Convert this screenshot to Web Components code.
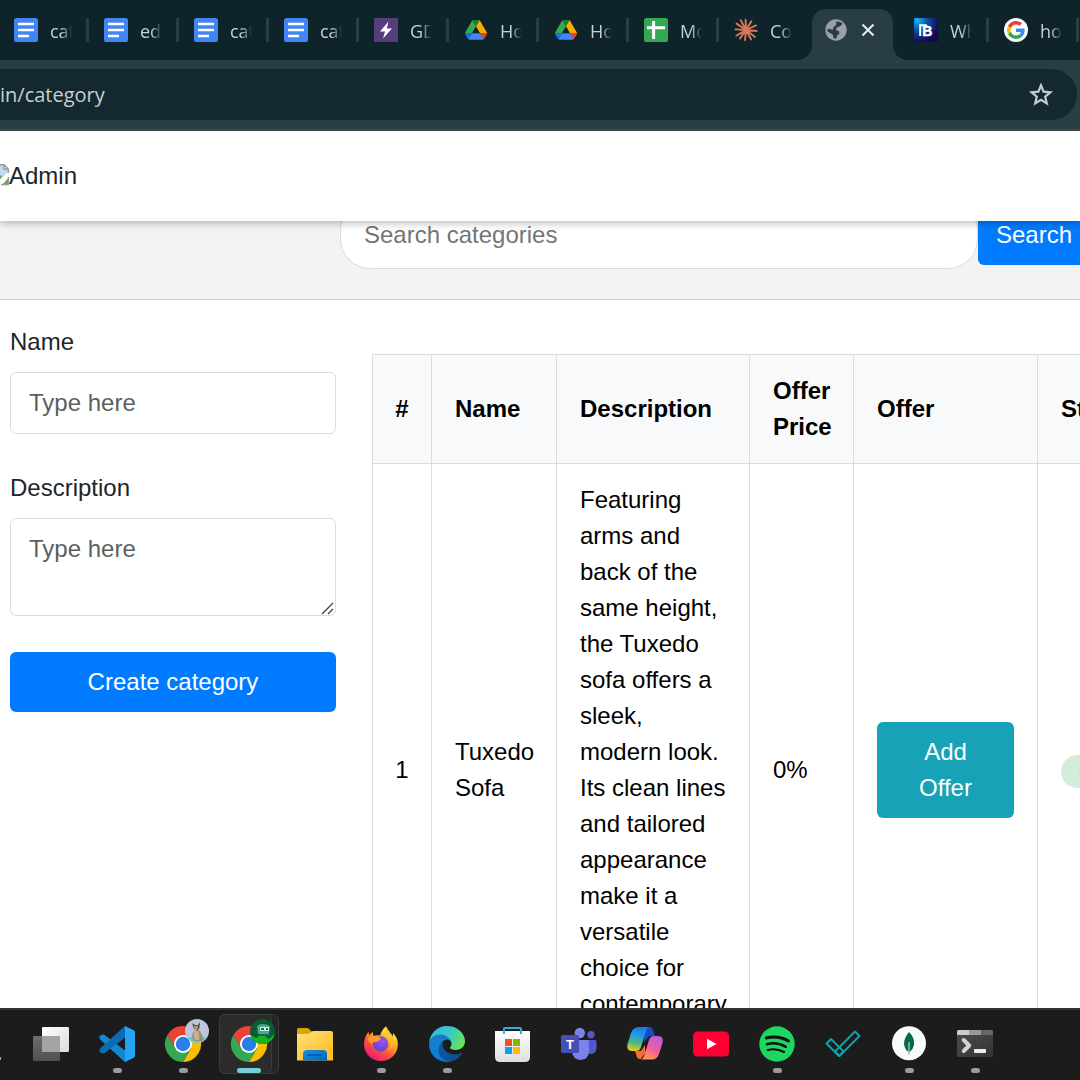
<!DOCTYPE html>
<html lang="en">
<head>
<meta charset="utf-8">
<title>Category</title>
<style>
  body { margin: 0; font-family: "Liberation Sans", Arial, sans-serif; font-size: 24px; line-height: 36px; color: #212529; }
</style>
</head>
<body>
<desktop-screen></desktop-screen>

<script>
const CHROME = `
  <path fill="#ea4335" d="M2.4 9A18 18 0 0 1 33.6 9L18 9.2L10.2 22.5Z"/>
  <path fill="#fbbc04" d="M33.6 9A18 18 0 0 1 18 36L25.8 22.5L18 9Z"/>
  <path fill="#34a853" d="M18 36A18 18 0 0 1 2.4 9L10.2 22.5L25.8 22.5Z"/>
  <circle cx="18" cy="18" r="9" fill="#fff"/><circle cx="18" cy="18" r="7.2" fill="#2b7de9"/>`;

const ICONS = {
  docs: ['0 0 24 24', `<rect width="24" height="24" rx="2.6" fill="#4285f4"/>
    <path stroke="#fff" stroke-width="2.6" d="M4 6H20M4 12H20M4 18H15"/>`],
  bolt: ['0 0 24 24', `<rect width="24" height="24" fill="#563d7c"/><path fill="#fff" d="M14.5 3.5L6 13.4H11L9 20.5L18 10.4H12.8Z"/>`],
  drive: ['0 0 24 24', `<g transform="translate(1 2) scale(.252)">
    <path fill="#1a73e8" d="m6.6 66.85 3.85 6.65c.8 1.4 1.95 2.5 3.3 3.3l13.75-23.8h-27.5c0 1.55.4 3.1 1.2 4.5z"/>
    <path fill="#34a853" d="m43.65 25-13.75-23.8c-1.35.8-2.5 1.9-3.3 3.3l-25.4 44a9.06 9.06 0 0 0-1.2 4.5h27.5z"/>
    <path fill="#ea4335" d="m73.55 76.8c1.35-.8 2.5-1.9 3.3-3.3l1.6-2.75 7.65-13.25c.8-1.4 1.2-2.95 1.2-4.5h-27.5l5.85 11.5z"/>
    <path fill="#188038" d="m43.65 25 13.75-23.8c-1.35-.8-2.9-1.2-4.5-1.2h-18.5c-1.6 0-3.15.45-4.5 1.2z"/>
    <path fill="#4285f4" d="m59.8 53h-32.3l-13.75 23.8c1.35.8 2.9 1.2 4.5 1.2h50.8c1.6 0 3.15-.45 4.5-1.2z"/>
    <path fill="#fbab00" d="m73.4 26.5-12.7-22c-.8-1.4-1.95-2.5-3.3-3.3l-13.75 23.8 16.15 28h27.45c0-1.55-.4-3.1-1.2-4.5z"/></g>`],
  sheet: ['0 0 24 24', `<rect width="24" height="24" rx="2.6" fill="#34a853"/><path stroke="#fff" stroke-width="3" d="M3 9.8H21M9.6 3V21"/>`],
  burst: ['0 0 24 24', `<g stroke="#d97757" stroke-width="1.9" stroke-linecap="round">
    <path d="M12 12L11.6 1.8M12 12L6.8 2.2M12 12L2.6 5.6M12 12L1.4 11.4M12 12L2.4 17.6M12 12L6 20.4M12 12L11 22.2M12 12L17 21.4M12 12L21 19M12 12L22.6 13M12 12L22 7.4M12 12L17.4 3.2"/></g><circle cx="12" cy="12" r="3.2" fill="#d97757"/>`],
  globe: ['0 0 24 24', `<circle cx="12" cy="12" r="10.7" fill="#9ba0a8"/>
    <path fill="#293e44" d="M12.5 3.6C15 3.4 17 4.2 18.6 5.8L15.8 8.6L13 9.2L11.8 12L15 13.2L15.4 15.8L13 17.4L12.4 20.6L9.4 20.2L9 16.8L6.4 15.2L3.4 13.2L3.5 10.8L9 11.8L9.4 9L12 7.2Z"/>`],
  bee: ['0 0 24 24', `<defs><radialGradient id="bg" cx=".15" cy=".1" r=".9"><stop offset="0" stop-color="#17b5f5"/><stop offset=".45" stop-color="#0b4fa8"/><stop offset="1" stop-color="#160858"/></radialGradient></defs>
    <rect width="24" height="24" fill="url(#bg)"/><path d="M6.2 18V7.2H13" fill="none" stroke="#fff" stroke-width="2"/>
    <text x="8.2" y="18" fill="#fff" stroke="#fff" stroke-width=".5" font-family="Liberation Sans" font-weight="700" font-size="14">B</text>`],
  google: ['0 0 24 24', `<circle cx="12" cy="12" r="12" fill="#fff"/><g transform="translate(3 3) scale(.375)">
    <path fill="#ea4335" d="M24 9.5c3.54 0 6.71 1.22 9.21 3.6l6.85-6.85C35.9 2.38 30.47 0 24 0 14.62 0 6.51 5.38 2.56 13.22l7.98 6.19C12.43 13.72 17.74 9.5 24 9.5z"/>
    <path fill="#4285f4" d="M46.98 24.55c0-1.57-.15-3.09-.38-4.55H24v9.02h12.94c-.58 2.96-2.26 5.48-4.78 7.18l7.73 6c4.51-4.18 7.09-10.36 7.09-17.65z"/>
    <path fill="#fbbc05" d="M10.53 28.59c-.48-1.45-.76-2.99-.76-4.59s.27-3.14.76-4.59l-7.98-6.19C.92 16.46 0 20.12 0 24c0 3.88.92 7.54 2.56 10.78l7.97-6.19z"/>
    <path fill="#34a853" d="M24 48c6.48 0 11.93-2.13 15.89-5.81l-7.73-6c-2.15 1.45-4.92 2.3-8.16 2.3-6.26 0-11.57-4.22-13.47-9.91l-7.98 6.19C6.51 42.62 14.62 48 24 48z"/></g>`],
  close: ['0 0 14 14', `<path stroke="#e4eaec" stroke-width="2.1" d="M1.5 1.5L12.5 12.5M12.5 1.5L1.5 12.5"/>`],
  star: ['0 0 24 24', `<path fill="none" stroke="#c5cbcd" stroke-width="2.2" d="M12 2.400L14.600 8.700L21.400 9.300L16.200 13.700L17.800 20.400L12 16.800L6.200 20.400L7.800 13.700L2.600 9.300L9.400 8.700Z"/>`],
  broken: ['0 0 9 24', `<path fill="#c3d6f5" d="M0 1H4L8 5V8L0 16Z"/><path fill="#fff" d="M4 0V5H8.500Z"/>
    <path fill="none" stroke="#9a9a9a" stroke-width="1.400" d="M0 .700H4L8.300 5V9M4 .700V5H8.300"/>
    <path fill="#58ad3a" d="M0 13V11L2 12.600L0 15ZM3 20L8 14.500V20Z"/><path stroke="#9a9a9a" stroke-width="1.400" d="M1 20.500H9M8.400 13V20.500"/>`],
  grip: ['0 0 14 14', `<path stroke="#444" stroke-width="1.4" d="M2 13L13 2M8 13L13 8"/>`],

  taskview: ['0 0 36 36', `<defs><linearGradient id="tv" x1="0" y1="0" x2="1" y2="1"><stop offset="0" stop-color="#fff"/><stop offset="1" stop-color="#dcdcdc"/></linearGradient>
    <linearGradient id="tg" x1="0" y1="0" x2="0" y2="1"><stop offset="0" stop-color="#6d6d6d"/><stop offset="1" stop-color="#505050"/></linearGradient></defs>
    <rect y="10" width="27" height="25" rx="1.3" fill="url(#tg)"/><rect x="9" y="1" width="27" height="25" rx="1.3" fill="url(#tv)"/><path fill="#a3a3a3" d="M9 10H26Q27 10 27 11V26H10Q9 26 9 25Z"/>`],
  code: ['0 0 36 36', `<path fill="#1287d6" d="M1 9.8L3.5 8.5Q4.7 8.2 5.6 9L27 25.2V36L25.3 35.4L.6 13Q-.4 11.5 1 9.8Z"/>
    <path fill="#0b6cb4" d="M1 26.2L3.5 27.5Q4.7 27.8 5.6 27L27 10.8V0L25.3.6L.6 23Q-.4 24.5 1 26.2Z"/>
    <path fill="#25a3f2" d="M26 0L34.8 4.2Q36 4.9 36 6.2V29.8Q36 31.1 34.8 31.8L26 36Z"/>`],
  chrome1: ['0 0 36 36', `${CHROME}<clipPath id="ca"><circle cx="32" cy="5" r="12"/></clipPath><g clip-path="url(#ca)"><rect x="20" y="-7" width="24" height="24" fill="#bcc7df"/>
    <path fill="#62cfc4" d="M20 13Q32 8 44 12V18H20Z"/><path fill="#a08a6c" d="M28 6Q26 12 29 15H38Q38 9 34 4Z"/><path fill="#c3b193" d="M29 4Q28 10 30 14H34Q35 8 33 4Z"/><path fill="#5b4a40" d="M27 -3L30 -1H33L35 -4L34.500 2L32 5L29 3Z"/><path fill="#b7a07c" d="M29 0H33L32 4H30Z"/></g>`],
  chrome2: ['0 0 36 36', `${CHROME}<clipPath id="cb"><circle cx="31.5" cy="5.5" r="12.5"/></clipPath><g clip-path="url(#cb)"><rect x="18" y="-8" width="27" height="27" fill="#075c33"/>
    <path fill="#15b51e" d="M18 8L25 12L31 8L38 13L45 7V20H18Z"/><path fill="#43a98a" d="M26 0Q31 -4 39 0L38 8H27Z"/><path fill="#d5eee6" d="M29 1H38V5H29Z"/><path fill="#176a50" d="M30 2H33V4H30ZM35 2H37V4H35ZM28 8H39V10H28Z"/></g>`],
  folder: ['0 0 36 36', `<defs><linearGradient id="fo" x1="0" y1="0" x2="1" y2="1"><stop offset="0" stop-color="#ffe07a"/><stop offset="1" stop-color="#fdbb1d"/></linearGradient><linearGradient id="fb" x1="0" y1="0" x2="1" y2="1"><stop offset="0" stop-color="#1792e0"/><stop offset="1" stop-color="#0866b8"/></linearGradient></defs>
    <path fill="#dea203" d="M0 4Q0 2 2 2H10Q11 2 12 3L15 6L12 10H0Z"/><path fill="url(#fo)" d="M0 8H10Q12 8 13 7L14 6Q15 5 17 5H34Q36 5 36 7V34.5H0Z"/>
    <path fill="url(#fb)" d="M6 34.5V28Q6 24 10 24H26Q30 24 30 28V34.5Z"/><path stroke="#07569b" stroke-width="1.6" stroke-linecap="round" d="M11 29H25"/>`],
  firefox: ['0 0 36 36', `<defs><linearGradient id="f1" x1=".85" y1=".05" x2=".25" y2="1"><stop offset=".05" stop-color="#fff04a"/><stop offset=".35" stop-color="#ffae24"/><stop offset=".6" stop-color="#ff5a36"/><stop offset="1" stop-color="#e5127b"/></linearGradient><radialGradient id="f2" cx=".6" cy=".35" r=".7"><stop offset="0" stop-color="#a44df5"/><stop offset="1" stop-color="#5846c9"/></radialGradient></defs>
    <path fill="url(#f1)" d="M1 18C1 13 3 9 5.5 5.8L6.2 9.2L9.5 5.8L10.5 10Q14 8.6 17 9.6C18 6 20 2.5 23 .3C23.5 5 28 6.8 30 10.8L30 7C33.5 10.5 35.2 14.5 34.8 19.5C34 29 27 35 18 35C8 35 1 27.5 1 18Z"/>
    <circle cx="17.6" cy="17.8" r="7.6" fill="url(#f2)"/><path fill="#ff9a2b" d="M5 12Q11 8 17 11.500L18 13L14.500 15.500L11.500 16.500Q9.500 14.500 9 18Q5 16 5 12Z"/>
    <path fill="#ffc02f" opacity=".85" d="M23 .3C22 6 27 10 28 15Q29 22 23.5 26Q31 23 31 13Q27 6 23 .3Z"/>`],
  edge: ['0 0 256 256', `<defs><linearGradient id="e1" x1="0" x2="1"><stop offset="0" stop-color="#0c59a4"/><stop offset="1" stop-color="#114a8b"/></linearGradient><linearGradient id="e2" x1=".6" y1="0" x2=".3" y2="1"><stop offset="0" stop-color="#1b78c4"/><stop offset=".5" stop-color="#1380d4"/><stop offset="1" stop-color="#0a7bd8"/></linearGradient><linearGradient id="e3" x1="0" y1=".3" x2="1" y2=".65"><stop offset="0" stop-color="#35b9e9"/><stop offset=".5" stop-color="#37c7c8"/><stop offset="1" stop-color="#6be44f"/></linearGradient></defs>
    <path fill="url(#e1)" d="M231 190.5c-3.4 1.8-6.9 3.4-10.5 4.7a101.9 101.9 0 0 1-35.9 6.5c-47.3 0-88.5-32.5-88.5-74.3 0-11.4 6.4-21.9 16.4-27.3-42.8 1.8-53.8 46.4-53.8 72.5 0 74 68.1 81.4 82.8 81.4 7.9 0 19.8-2.3 27-4.6l1.3-.4a128 128 0 0 0 66.6-52.8 4 4 0 0 0-5.4-5.7z"/>
    <path fill="url(#e2)" d="M105.7 241.4a79.2 79.2 0 0 1-22.7-21.3 80.7 80.7 0 0 1 29.5-120c3.2-1.5 8.5-4.1 15.6-4a32.4 32.4 0 0 1 25.7 13 31.9 31.9 0 0 1 6.3 18.7c0-.2 24.5-79.6-80-79.6-43.9 0-80 41.7-80 78.2a130.2 130.2 0 0 0 12.1 56 128 128 0 0 0 156.4 67 75.6 75.6 0 0 1-62.8-8z"/>
    <path fill="url(#e3)" d="M152.3 148.9c-.8 1-3.3 2.5-3.3 5.7 0 2.6 1.7 5.1 4.7 7.2 14.4 10 41.5 8.7 41.6 8.7a59.6 59.6 0 0 0 30.3-8.3 61.4 61.4 0 0 0 30.4-52.9c.3-22.4-8-37.3-11.3-43.9C223.5 23.9 177.7 0 128 0A128 128 0 0 0 0 126.2c.5-36.5 36.8-66 80-66 3.5 0 23.5.3 42 10.1 16.3 8.6 24.9 18.9 30.8 29.2 6.2 10.7 7.3 24.1 7.3 29.5 0 5.3-2.7 13.3-7.8 19.9z"/>`],
  store: ['0 0 36 36', `<defs><linearGradient id="st" x1="0" y1="0" x2="0" y2="1"><stop offset="0" stop-color="#fff"/><stop offset="1" stop-color="#dedede"/></linearGradient></defs>
    <path fill="url(#st)" d="M0 5H35V31Q35 36 30 36H5Q0 36 0 31Z"/><path fill="none" stroke="#27b0ea" stroke-width="2" d="M9 8V3Q9 2 10 2H25Q26 2 26 3V8"/>
    <path fill="#f25022" d="M10 13H17V20H10Z"/><path fill="#7fba00" d="M18 13H25V20H18Z"/><path fill="#00a4ef" d="M10 21H17V28H10Z"/><path fill="#ffb900" d="M18 21H25V28H18Z"/>`],
  teams: ['0 0 36 36', `<circle cx="30" cy="8.7" r="3.7" fill="#5059c9"/><path fill="#5059c9" d="M25 14H34Q35.5 14 35.5 15.5V22Q35 28 29 28Q26 28 25 26Z"/>
    <circle cx="18.8" cy="7" r="5.2" fill="#7b83eb"/><path fill="#7b83eb" d="M11 14H26.5Q28 14 28 15.5V25Q27.5 33.5 19.5 34Q12 33.5 11 26Z"/>
    <rect y="9" width="18" height="18" rx="1.6" fill="#464eb8"/><text x="9" y="22.6" text-anchor="middle" fill="#fff" font-family="Liberation Sans" font-weight="700" font-size="13">T</text>`],
  copilot: ['0 0 36 36', `<defs><linearGradient id="c1" x1=".5" y1="0" x2=".35" y2="1"><stop offset="0" stop-color="#1c78ea"/><stop offset=".35" stop-color="#1e9fe0"/><stop offset=".68" stop-color="#52b77e"/><stop offset="1" stop-color="#f3cb17"/></linearGradient><linearGradient id="c2" x1=".8" y1="0" x2=".3" y2="1"><stop offset="0" stop-color="#b65bea"/><stop offset=".5" stop-color="#ef5ba1"/><stop offset="1" stop-color="#ff994b"/></linearGradient></defs>
    <path fill="#174ec4" d="M18 1H22Q25 1 26 4L28 10H24Q21 10 20 13L17 16Z"/><path fill="#f76a36" d="M8 25H14L18 19L18 27L14 33H13Q10 33 9.5 30Z"/>
    <path fill="url(#c1)" d="M12 1H23Q20 1 19 5L14 21Q13 25 9 25H5Q-1 25 .5 18L4 7Q6 1 12 1Z"/>
    <path fill="url(#c2)" d="M27 10H31Q37 10 35.5 17L32 28Q30 33.5 25 33.5H13Q16 33.5 17 30L22 14Q23.5 10 27 10Z"/>`],
  youtube: ['0 0 36 36', `<rect y="5.5" width="36" height="25" rx="4.5" fill="#ff0033"/><path fill="#fff" d="M14 12.7V23.3L23.5 18Z"/>`],
  spotify: ['0 0 36 36', `<circle cx="18" cy="18" r="17.7" fill="#1ed760"/><g fill="none" stroke="#121212" stroke-linecap="round">
    <path stroke-width="3" d="M7.3 12Q19 9 29.5 15"/><path stroke-width="2.5" d="M8 18.2Q18 15.6 26.8 20.8"/><path stroke-width="2.1" d="M8.8 24Q17.5 21.8 25 26"/></g>`],
  check: ['0 0 36 36', `<g fill="none" stroke="#0ca5ad" stroke-width="1.9" stroke-linejoin="round"><path d="M30 5.5L34.5 10L14.5 30L10 25.5Z"/><path d="M6 13L1.5 17.5L14 30L18.5 25.5Z"/></g>`],
  leaf: ['0 0 36 36', `<circle cx="18" cy="17.3" r="17" fill="#f9fbfa"/><path fill="#04684a" d="M18 6Q24 12 23 18.5Q22 24 18.4 26L18 28.5L17.6 26Q13.500 23 13 18Q13 12 18 6Z"/><path stroke="#a6cdbd" stroke-width="1.3" d="M18 16V28.5"/>`],
  terminal: ['0 0 36 36', `<defs><linearGradient id="tm" x1="0" y1="0" x2="1" y2="1"><stop offset="0" stop-color="#4d4d4d"/><stop offset="1" stop-color="#343434"/></linearGradient></defs>
    <rect y="4" width="36" height="27" rx="1.5" fill="url(#tm)"/><path fill="#ccc" d="M0 9V5.5Q0 4 1.5 4H12V9Z"/><path fill="#999" d="M12 4H24V9H12Z"/><path fill="#666" d="M24 4H34.5Q36 4 36 5.5V9H24Z"/>
    <path fill="none" stroke="#d2d2d2" stroke-width="4" stroke-linecap="round" stroke-linejoin="round" d="M6.7 14L12.2 19.5L6.7 25"/><rect x="17" y="23" width="12" height="4" rx=".8" fill="#ececec"/>`]
};

function define(name, render) {
  customElements.define(name, class extends HTMLElement {
    connectedCallback() {
      if (this.shadowRoot) return;
      const t = document.createElement('template');
      t.innerHTML = '<style>*,*::before,*::after{box-sizing:border-box}</style>' + render(this);
      this.attachShadow({ mode: 'open' }).append(t.content.cloneNode(true));
    }
  });
}

define('ui-icon', el => {
  const [box, art] = ICONS[el.getAttribute('name')];
  return `<style>:host{display:block;flex:none}svg{display:block;width:100%;height:100%;overflow:visible}</style>
    <svg viewBox="${box}" aria-hidden="true">${art}</svg>`;
});

define('browser-tab', el => `
<style>
  :host { display: flex; flex: none; box-sizing: border-box; width: 90px; height: 60px; align-items: center; padding-left: 14px; position: relative; }
  ui-icon { width: 24px; height: 24px; }
  span { width: 22px; margin-left: 12px; padding-top: 2px; overflow: hidden; white-space: nowrap;
    font: 18px/26px "Open Sans", "Noto Sans", sans-serif; color: #c3d2d6;
    mask-image: linear-gradient(90deg, #000 50%, transparent); -webkit-mask-image: linear-gradient(90deg, #000 50%, transparent); }
  i { display: block; width: 3px; height: 24px; margin-left: 14px; background: #293e44; }
  :host([plain]) i { display: none; }
  .shape { display: none; }
  :host([active]) .shape { display: block; position: absolute; inset: 9px 7px 0 2px; background: #293e44; border-radius: 14px 14px 0 0; }
  .shape::before, .shape::after { content: ""; position: absolute; bottom: 0; width: 15px; height: 15px; }
  .shape::before { right: 100%; background: radial-gradient(circle at 0 0, transparent 15px, #293e44 15px); }
  .shape::after { left: 100%; background: radial-gradient(circle at 100% 0, transparent 15px, #293e44 15px); }
  :host([active]) > ui-icon, ui-icon, button { position: relative; }
  button { border: 0; background: none; padding: 0; margin-left: 13px; }
  button ui-icon { width: 14px; height: 14px; }
</style>
<div class="shape"></div>
<ui-icon name="${el.getAttribute('icon')}"></ui-icon>
${el.hasAttribute('active') ? '<button aria-label="Close tab"><ui-icon name="close"></ui-icon></button>' : '<span><slot></slot></span><i></i>'}`);

define('browser-tabs', () => `
<style>:host { display: flex; flex: none; overflow: hidden; background: #0e242a; }</style><slot></slot>`);

define('address-bar', () => `
<style>
  :host { display: block; flex: none; padding: 9px 3px 9px 0; background: #293e44; border-bottom: 2px solid #44474a; position: relative; z-index: 2; }
  div { display: flex; align-items: center; height: 51px; padding-right: 24px; background: #14292f; border-radius: 0 26px 26px 0; }
  input { flex: 1; min-width: 0; border: 0; padding: 0; background: none; outline: 0; color: #c9d0d2; font: 20px/30px "Open Sans", "Noto Sans", sans-serif; }
  button { border: 0; background: none; padding: 0; }
  ui-icon { width: 24px; height: 24px; }
</style>
<div><input aria-label="Address" value="in/category"><button aria-label="Bookmark"><ui-icon name="star"></ui-icon></button></div>`);

define('site-header', () => `
<style>
  :host { display: flex; flex: none; align-items: center; height: 90px; background: #fff; box-shadow: 0 2px 8px rgba(0,0,0,.28); position: relative; z-index: 1; }
  a { display: flex; align-items: center; color: inherit; text-decoration: none; }
  ui-icon { width: 9px; height: 24px; }
</style>
<a href="#"><ui-icon name="broken"></ui-icon><slot></slot></a>`);

define('category-search', () => `
<style>
  :host { display: block; margin-top: -50px; padding: 30px 0 30px 340px; background: #f3f3f3; border-bottom: 1px solid #ccc; }
  form { display: flex; align-items: center; margin: 0; }
  input { flex: none; width: 638px; height: 68px; border: 1px solid #dbdbdb; border-radius: 30px; padding: 0 23px; font: inherit; background: #fff; color: inherit; }
  input::placeholder { color: #757575; }
  button { flex: none; border: 0; border-radius: 6px; padding: 12px 18px; font: inherit; background: #007bff; color: #fff; }
</style>
<form><input type="search" aria-label="Search categories" placeholder="Search categories"><button type="button">Search</button></form>`);

define('category-form', () => `
<style>
  :host { display: block; padding-top: 24px; }
  form { display: flex; flex-direction: column; gap: 36px; margin: 0; }
  .field { display: flex; flex-direction: column; gap: 12px; position: relative; }
  input, textarea { display: block; width: 100%; margin: 0; border: 1px solid #dbdbdb; border-radius: 6px; padding: 12px 18px; font: inherit; color: inherit; background: #fff; }
  input { height: 62px; }
  textarea { height: 98px; overflow: hidden; resize: vertical; }
  textarea::-webkit-resizer { display: none; }
  ::placeholder { color: #5c5f62; }
  ui-icon { position: absolute; right: 2px; bottom: 1px; width: 14px; height: 14px; pointer-events: none; }
  button { border: 0; border-radius: 6px; padding: 12px 18px; font: inherit; background: #007bff; color: #fff; }
</style>
<form>
  <div class="field"><label for="name">Name</label><input id="name" placeholder="Type here"></div>
  <div class="field"><label for="desc">Description</label><textarea id="desc" rows="2" placeholder="Type here"></textarea><ui-icon name="grip"></ui-icon></div>
  <button type="button">Create category</button>
</form>`);

define('category-table', () => `
<style>
  :host { display: block; padding-top: 54px; color: #000; }
  table { table-layout: fixed; width: 840px; border-collapse: collapse; }
  th, td { border: 1px solid #dbdbdb; padding: 18px 23px; text-align: left; vertical-align: middle; }
  th { background: #f8f9fb; }
  th:first-child, td:first-child { padding: 18px 0; text-align: center; }
  .n { width: 59px } .name { width: 125px } .desc { width: 193px } .price { width: 104px } .offer { width: 184px }
  button { width: 100%; border: 0; border-radius: 6px; padding: 12px 36px; font: inherit; color: #fff; background: #17a2b8; display: block; }
  .badge { display: inline-block; padding: 0 18px; border-radius: 17px; font: 700 18px/33px "Liberation Sans", Arial, sans-serif; background: #d4edda; color: #155724; vertical-align: middle; }
</style>
<table>
  <colgroup><col class="n"><col class="name"><col class="desc"><col class="price"><col class="offer"><col></colgroup>
  <thead><tr><th>#</th><th>Name</th><th>Description</th><th>Offer Price</th><th>Offer</th><th>Status</th></tr></thead>
  <tbody><tr><td>1</td><td>Tuxedo Sofa</td>
    <td>Featuring arms and back of the same height, the Tuxedo sofa offers a sleek, modern look. Its clean lines and tailored appearance make it a versatile choice for contemporary spaces.</td>
    <td>0%</td><td><button type="button">Add Offer</button></td><td><span class="badge">Listed</span></td></tr></tbody>
</table>`);

define('task-item', el => `
<style>
  :host { display: flex; flex: none; box-sizing: border-box; flex-direction: column; align-items: center; width: 60px; height: 60px; padding-top: 12px; position: relative; }
  button { position: relative; z-index: 1; display: block; border: 0; padding: 0; background: none; }
  ui-icon { width: 36px; height: 36px; }
  i { display: none; position: relative; z-index: 1; width: 9px; height: 5px; margin-top: 6px; border-radius: 3px; background: #9b9b9b; }
  :host([running]) i { display: block; }
  :host([active]) i { display: block; width: 24px; background: #72cfd6; }
  :host([active])::before, :host([active])::after { content: ""; position: absolute; box-sizing: border-box; inset: 0 7px 0 0; border: 1px solid #3b3b3b; border-radius: 6px; background: #2b2b2b; }
  :host([active])::before { inset: 0; background: #252525; }
</style>
<button aria-label="${el.getAttribute('icon')}"><ui-icon name="${el.getAttribute('icon')}"></ui-icon></button><i></i>`);

define('task-bar', () => `
<style>
  :host { display: flex; flex: none; box-sizing: border-box; gap: 6px; height: 72px; padding: 4px 0 0 21px; overflow: hidden; background: #1c1c1c; border-top: 2px solid #343434; position: relative; }
  b { position: absolute; left: -2px; top: 47px; width: 3px; height: 3px; border-radius: 2px; background: #ddd; }
</style><b></b><slot></slot>`);

define('desktop-screen', () => `
<style>
  :host { display: flex; flex-direction: column; height: 100vh; overflow: hidden; background: #fff; }
  main { flex: 1; min-height: 0; overflow: hidden; }
  .columns { display: grid; grid-template-columns: 326px 1fr; gap: 36px; padding-left: 10px; }
  browser-tabs, address-bar, site-header { box-sizing: border-box; }
</style>
<browser-tabs>
  <browser-tab icon="docs">cat</browser-tab><browser-tab icon="docs">ed</browser-tab><browser-tab icon="docs">cat</browser-tab><browser-tab icon="docs">cat</browser-tab>
  <browser-tab icon="bolt">GD</browser-tab><browser-tab icon="drive">Ho</browser-tab><browser-tab icon="drive">Ho</browser-tab><browser-tab icon="sheet">Mo</browser-tab>
  <browser-tab icon="burst" plain>Co</browser-tab><browser-tab icon="globe" active></browser-tab><browser-tab icon="bee">Wh</browser-tab><browser-tab icon="google">ho</browser-tab>
</browser-tabs>
<address-bar></address-bar>
<site-header>Admin</site-header>
<main>
  <category-search></category-search>
  <div class="columns"><category-form></category-form><category-table></category-table></div>
</main>
<task-bar>
  <task-item icon="taskview"></task-item><task-item icon="code" running></task-item><task-item icon="chrome1" running></task-item><task-item icon="chrome2" active></task-item>
  <task-item icon="folder"></task-item><task-item icon="firefox" running></task-item><task-item icon="edge" running></task-item><task-item icon="store"></task-item>
  <task-item icon="teams"></task-item><task-item icon="copilot"></task-item><task-item icon="youtube"></task-item><task-item icon="spotify" running></task-item>
  <task-item icon="check"></task-item><task-item icon="leaf" running></task-item><task-item icon="terminal" running></task-item>
</task-bar>`);
</script>
</body>
</html>
